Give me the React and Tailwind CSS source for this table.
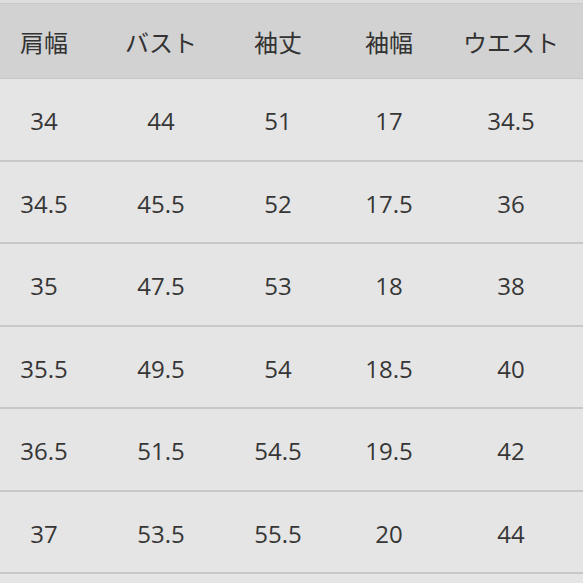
const headers = ['肩幅', 'バスト', '袖丈', '袖幅', 'ウエスト'];

const rows = [
  ['34', '44', '51', '17', '34.5'],
  ['34.5', '45.5', '52', '17.5', '36'],
  ['35', '47.5', '53', '18', '38'],
  ['35.5', '49.5', '54', '18.5', '40'],
  ['36.5', '51.5', '54.5', '19.5', '42'],
  ['37', '53.5', '55.5', '20', '44'],
];

const cols = 'grid grid-cols-[88px_146px_88px_134px_110px]';

export default function App() {
  return (
    <div
      className="w-[583px] h-[583px] overflow-hidden bg-[#e5e5e5] text-[#363636] text-[24px]"
      style={{ fontFamily: '"Open Sans", "Noto Sans CJK JP", sans-serif' }}
    >
      {/* top strip */}
      <div className="h-[3px] bg-[#dddddd] border-b border-[#c9c9c9] box-content" />

      {/* header */}
      <div className={`${cols} h-[74px] bg-[#d2d2d2] border-b border-[#c6c6c6] items-center box-content`}>
        {headers.map((h) => (
          <div
            key={h}
            className="text-center pt-[1px] leading-none text-[#333333]"
            style={{ fontFamily: '"Noto Sans CJK JP", sans-serif' }}
          >
            {h}
          </div>
        ))}
      </div>

      {/* body rows */}
      {rows.map((r, i) => (
        <div
          key={i}
          className={`${cols} h-[82.5px] items-center border-b-2 border-[#c8c8c8] ${i === 0 ? 'pt-[4px]' : 'pt-[4px]'}`}
        >
          {r.map((v, j) => (
            <div key={j} className="text-center leading-none">
              {v}
            </div>
          ))}
        </div>
      ))}
    </div>
  );
}
